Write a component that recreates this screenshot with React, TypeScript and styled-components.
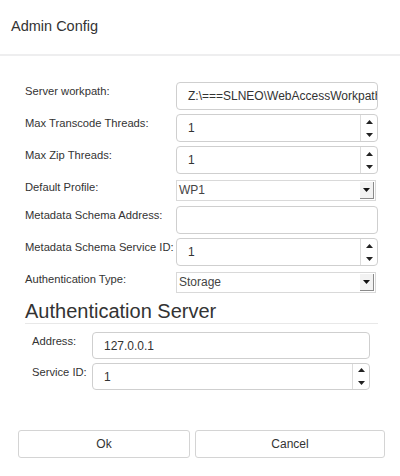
import styled, { createGlobalStyle } from "styled-components";

const GlobalStyle = createGlobalStyle`
  html, body {
    margin: 0;
    padding: 0;
    background: #ffffff;
  }
  body {
    font-family: "Liberation Sans", Arial, sans-serif;
    color: #333333;
  }
  * {
    box-sizing: border-box;
  }
`;

type Field =
  | { kind: "text"; label: string; value: string }
  | { kind: "number"; label: string; value: string }
  | { kind: "select"; label: string; value: string };

const mainFields: Field[] = [
  { kind: "text", label: "Server workpath:", value: "Z:\\===SLNEO\\WebAccessWorkpath" },
  { kind: "number", label: "Max Transcode Threads:", value: "1" },
  { kind: "number", label: "Max Zip Threads:", value: "1" },
  { kind: "select", label: "Default Profile:", value: "WP1" },
  { kind: "text", label: "Metadata Schema Address:", value: "" },
  { kind: "number", label: "Metadata Schema Service ID:", value: "1" },
  { kind: "select", label: "Authentication Type:", value: "Storage" },
];

const serverFields: Field[] = [
  { kind: "text", label: "Address:", value: "127.0.0.1" },
  { kind: "number", label: "Service ID:", value: "1" },
];

const Spinner = () => (
  <SpinBox>
    <SpinButton>
      <svg width="7" height="4" viewBox="0 0 7 4">
        <path d="M3.5 0 L7 4 L0 4 Z" fill="#222" />
      </svg>
    </SpinButton>
    <SpinButton>
      <svg width="7" height="4" viewBox="0 0 7 4">
        <path d="M0 0 L7 0 L3.5 4 Z" fill="#222" />
      </svg>
    </SpinButton>
  </SpinBox>
);

const Control = ({ field }: { field: Field }) => {
  if (field.kind === "select") {
    return (
      <SelectBox>
        <SelectValue>{field.value}</SelectValue>
        <DropButton>
          <svg width="7" height="4" viewBox="0 0 7 4">
            <path d="M0 0 L7 0 L3.5 4 Z" fill="#111" />
          </svg>
        </DropButton>
      </SelectBox>
    );
  }
  return (
    <InputBox>
      <InputValue>{field.value}</InputValue>
      {field.kind === "number" && <Spinner />}
    </InputBox>
  );
};

export default function App() {
  return (
    <>
      <GlobalStyle />
      <Dialog>
        <Header>
          <Title>Admin Config</Title>
        </Header>
        <Body>
          <Form $labelWidth={151}>
            {mainFields.map((f) => (
              <Row key={f.label} $select={f.kind === "select"}>
                <Label>{f.label}</Label>
                <Control field={f} />
              </Row>
            ))}
          </Form>
          <SectionTitle>Authentication Server</SectionTitle>
          <SubForm>
            <Form $labelWidth={60}>
              {serverFields.map((f) => (
                <Row key={f.label} $select={false} $compact>
                  <Label>{f.label}</Label>
                  <Control field={f} />
                </Row>
              ))}
            </Form>
          </SubForm>
        </Body>
        <Footer>
          <ActionButton>Ok</ActionButton>
          <ActionButton>Cancel</ActionButton>
        </Footer>
      </Dialog>
    </>
  );
}

const Dialog = styled.div`
  width: 400px;
  height: 476px;
  display: flex;
  flex-direction: column;
  background: #fff;
`;

const Header = styled.div`
  height: 56px;
  padding: 18px 11px 0;
  border-bottom: 2px solid #eeeeef;
`;

const Title = styled.h1`
  margin: 0;
  font-size: 14.5px;
  font-weight: 400;
  color: #333;
`;

const Body = styled.div`
  padding: 26px 22px 0 25px;
`;

const Form = styled.div<{ $labelWidth: number }>`
  display: grid;
  grid-template-columns: ${(p) => p.$labelWidth}px 1fr;
  row-gap: 4px;
`;

const Row = styled.div<{ $select: boolean; $compact?: boolean }>`
  display: contents;

  & > div {
    height: ${(p) => (p.$select ? "21px" : p.$compact ? "27px" : "28px")};
    margin: ${(p) => (p.$select ? "2px 2px 1px 0" : "0")};
  }
`;

const Label = styled.span`
  font-size: 11.2px;
  color: #333;
  padding-top: 3px;
  white-space: nowrap;
`;

const InputBox = styled.div`
  display: flex;
  align-items: stretch;
  border: 1px solid #cfcfcf;
  border-radius: 4px;
  background: #fff;
  overflow: hidden;
`;

const InputValue = styled.span`
  flex: 1;
  min-width: 0;
  padding: 0 4px 0 11px;
  font-size: 12px;
  line-height: 26px;
  color: #333;
  white-space: nowrap;
  overflow: hidden;
`;

const SpinBox = styled.div`
  width: 17px;
  display: flex;
  flex-direction: column;
  border-left: 1px solid #dcdcdc;
`;

const SpinButton = styled.span`
  flex: 1;
  display: flex;
  align-items: center;
  justify-content: center;
`;

const SelectBox = styled.div`
  display: flex;
  align-items: stretch;
  border: 1px solid #d9d9d9;
  background: #fff;
`;

const SelectValue = styled.span`
  flex: 1;
  padding-left: 2px;
  font-size: 12px;
  line-height: 19px;
  color: #444;
`;

const DropButton = styled.span`
  width: 14px;
  margin: 1px 1px 1px 0;
  display: flex;
  align-items: center;
  justify-content: center;
  background: #f2f2f2;
  border-right: 1px solid #8a8a8a;
  border-bottom: 1px solid #8a8a8a;
`;

const SectionTitle = styled.h2`
  margin: 6px 0 0;
  font-size: 20px;
  line-height: 23px;
  font-weight: 400;
  color: #333;
  border-bottom: 1px solid #e8e8e8;
`;

const SubForm = styled.div`
  padding: 8px 8px 0 7px;
`;

const Footer = styled.div`
  margin-top: auto;
  display: grid;
  grid-template-columns: 172px 1fr;
  column-gap: 5px;
  padding: 0 15px 18px 18px;
`;

const ActionButton = styled.button`
  height: 28px;
  border: 1px solid #d4d4d4;
  border-radius: 3px;
  background: #fff;
  font-family: "Liberation Sans", Arial, sans-serif;
  font-size: 12px;
  color: #333;
`;
